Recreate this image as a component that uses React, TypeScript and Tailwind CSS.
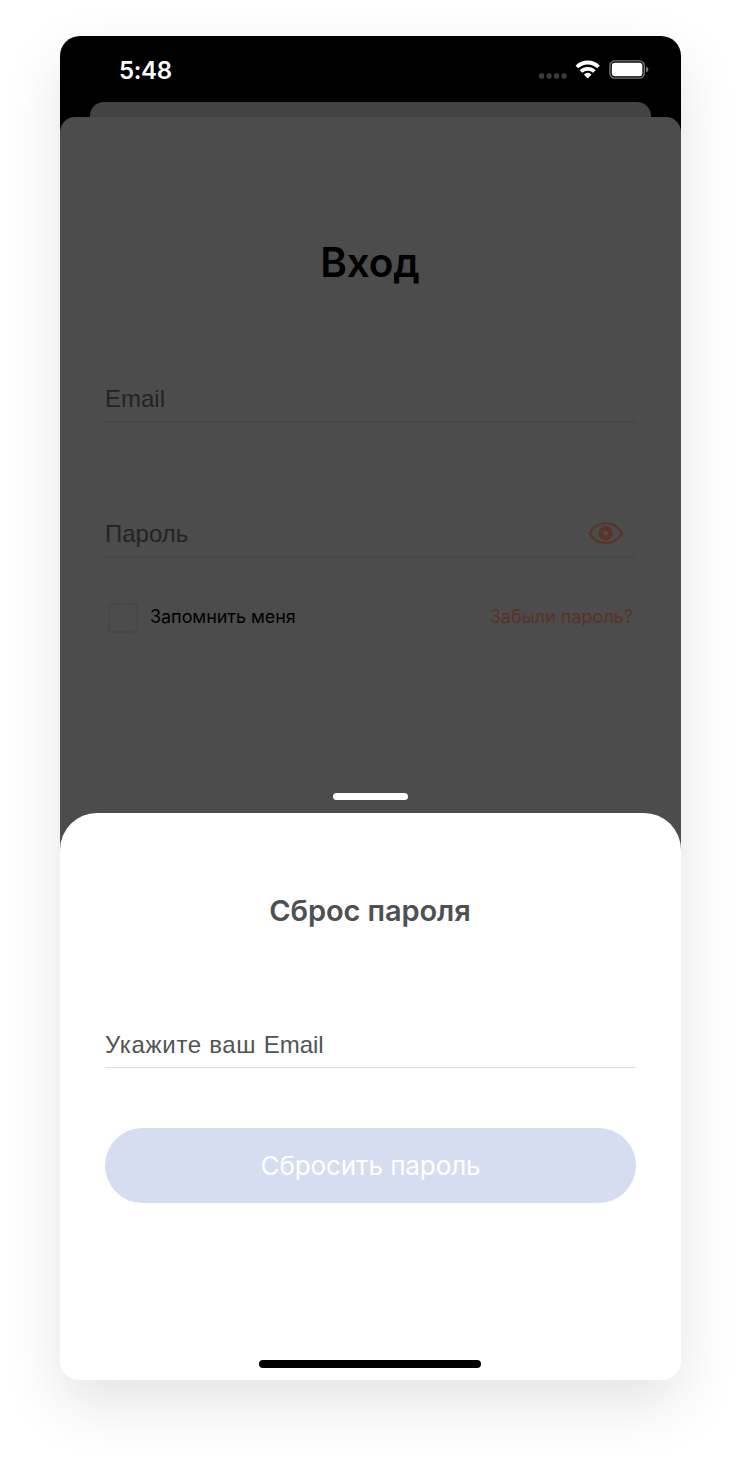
function StatusBar() {
  return (
    <header className="flex h-[66px] items-start justify-between pl-[59px] pr-[31px] pt-[19px]">
      <span className="whitespace-nowrap pt-px text-[24px] font-semibold leading-[30px] tracking-[-0.35px] text-white">
        5:48
      </span>
      <svg className="mt-[5px] h-5 w-[112px]" viewBox="0 0 112 20" fill="none">
        <g fill="#3b3b3b">
          <rect x="1" y="13.200" width="5.200" height="5.600" rx="1.800" />
          <rect x="8.500" y="13.200" width="5.200" height="5.600" rx="1.800" />
          <rect x="16" y="13.200" width="5.200" height="5.600" rx="1.800" />
          <rect x="23.500" y="13.200" width="5.200" height="5.600" rx="1.800" />
        </g>
        <g stroke="#fff" strokeWidth="3.8">
          <path d="M38.900 7A15.2 15.2 0 0 1 60.500 7" />
          <path d="M43 11.500A9.6 9.6 0 0 1 56.400 11.500" />
        </g>
        <path d="M45.9 14.4Q49.700 11 53.5 14.4L49.700 18.500Z" fill="#fff" />
        <rect x="71.900" y="0.9" width="34.4" height="17.2" rx="5" stroke="#777" strokeWidth="1.4" />
        <rect x="73.800" y="2.8" width="30.6" height="13.4" rx="3" fill="#fff" />
        <path d="M108 6.6Q110.4 7.5 110.4 9.6Q110.4 11.7 108 12.6Z" fill="#777" />
      </svg>
    </header>
  );
}

function EyeIcon() {
  return (
    <svg className="mr-3 h-6 w-9" viewBox="0 0 36 24" fill="none" stroke="#5a3228">
      <path
        d="M1.5 12.200C5 6 11 2.300 17.700 2.300S30.500 6 33.900 12.200C30.500 18.400 24.500 22.100 17.700 22.100S5 18.400 1.500 12.200Z"
        strokeWidth="2"
        strokeLinejoin="round"
      />
      <circle cx="17.700" cy="12.200" r="4.800" strokeWidth="4.800" />
    </svg>
  );
}

function LoginForm() {
  return (
    <section className="flex h-[696px] flex-col px-[45px]">
      <h1 className="mt-[122px] whitespace-nowrap pr-px text-center text-[40.5px] font-semibold leading-[48px] tracking-[-0.2px] text-black">
        Вход
      </h1>
      <div className="mt-[84px] h-[52px] border-b-2 border-[#46464b] pt-3.5 font-['Liberation_Sans',sans-serif] text-[24px] leading-7 text-[#222424]">
        Email
      </div>
      <div className="mt-[83px] flex h-[52px] items-start justify-between border-b-2 border-[#46464b] pt-3 font-['Liberation_Sans',sans-serif] text-[24px] leading-7 text-[#222424]">
        <span className="pt-0.5">Пароль</span>
        <div className="pt-[3px]">
          <EyeIcon />
        </div>
      </div>
      <div className="mt-11 flex h-[31px] items-center justify-between px-[3px] text-[18px]">
        <label className="flex items-center gap-3">
          <span className="size-[30px] rounded-[5px] border-2 border-[#46464c]" />
          <span className="whitespace-nowrap pb-0.5 tracking-[-0.06px] text-black">Запомнить меня</span>
        </label>
        <a className="whitespace-nowrap pb-0.5 text-[#5a3228]">Забыли пароль?</a>
      </div>
      <div className="mt-auto mb-[13px] h-[7px] w-[75px] self-center rounded-full bg-white" />
    </section>
  );
}

function ResetSheet() {
  return (
    <section className="flex h-[567px] flex-col rounded-t-[37px] bg-white px-[45px]">
      <h2 className="mt-20 whitespace-nowrap pr-px text-center text-[29px] font-semibold leading-9 tracking-[-0.1px] text-[#4d5154]">
        Сброс пароля
      </h2>
      <div className="mt-[88px] h-[51px] whitespace-nowrap border-b border-[#d5dce8] pt-3.5 font-['Liberation_Sans',sans-serif] text-[24px] leading-7 text-[#505456]">
        <span className="tracking-[0.68px]">Укажите ваш </span>Email
      </div>
      <button className="mt-[60px] h-[75px] whitespace-nowrap rounded-full bg-[#d5ddf0] text-[26px] tracking-[-0.1px] text-white">
        Сбросить пароль
      </button>
      <div className="mt-auto mb-3 mr-px h-2 w-[222px] self-center rounded-full bg-black" />
    </section>
  );
}

export default function App() {
  return (
    <main className="flex min-h-[1464px] items-start justify-center bg-white pt-9 font-['Inter',sans-serif]">
      <div className="h-[1344px] w-[621px] overflow-hidden rounded-[20px] bg-linear-to-b from-black from-50% to-white to-50% shadow-[0_24px_60px_rgba(0,0,0,0.11)]">
        <StatusBar />
        <div className="mx-[30px] h-[15px] rounded-t-[14px] bg-[#434343]" />
        <div className="rounded-t-[15px] rounded-b-[20px] bg-[#4c4c4c] bg-linear-to-b from-[#4c4c4c] from-65% to-white to-65%">
          <LoginForm />
          <ResetSheet />
        </div>
      </div>
    </main>
  );
}
